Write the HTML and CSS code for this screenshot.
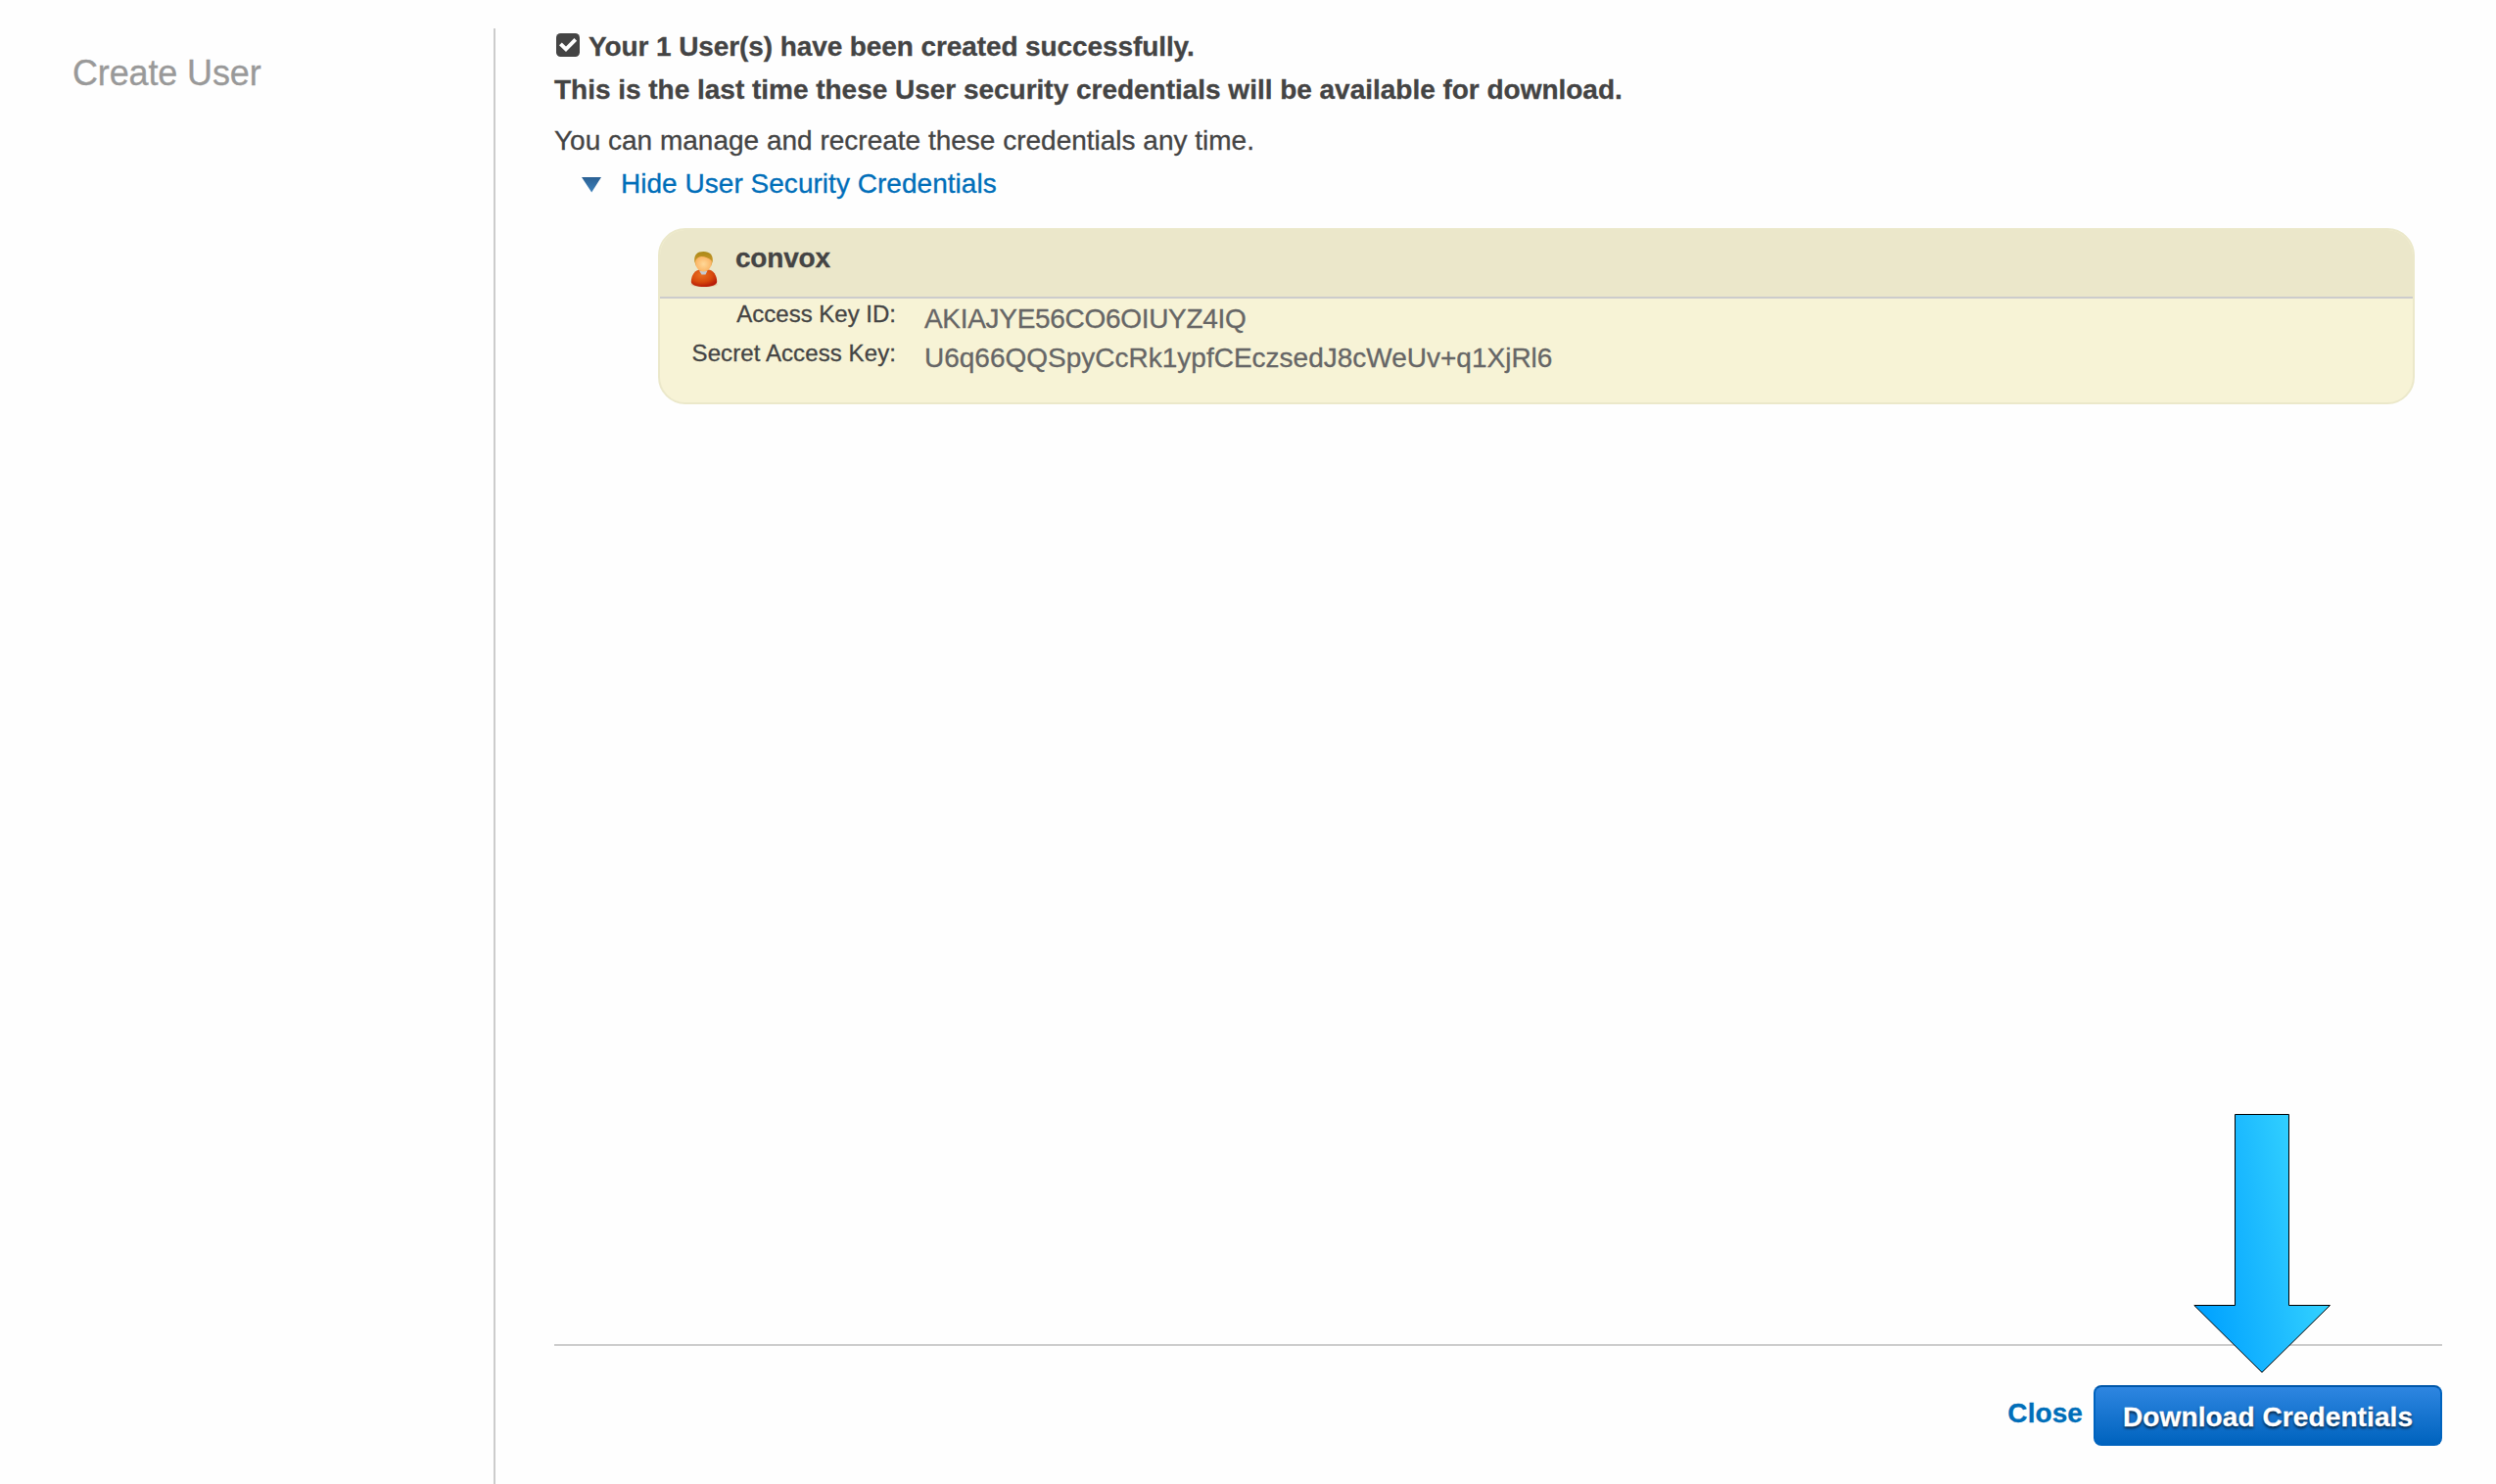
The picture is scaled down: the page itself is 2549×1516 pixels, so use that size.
FILE: index.html
```html
<!DOCTYPE html>
<html lang="en">
<head>
<meta charset="utf-8">
<title>Create User</title>
<link rel="stylesheet" href="styles.css">
</head>
<body>
<div class="wizard">
  <aside class="sidebar">
    <h1 class="title">Create User</h1>
  </aside>
  <main class="main">
    <div class="message">
      <svg class="check" viewBox="0 0 24 24" aria-hidden="true">
        <rect width="24" height="24" rx="4.5" fill="#444"/>
        <path d="M3 12.300 5.800 9.500l4.200 4.100 8.400-8.600 2.700 2.800L10 19z" fill="#fff"/>
      </svg>
      <strong class="created">Your 1 User(s) have been created successfully.</strong>
    </div>
    <strong class="warning">This is the last time these User security credentials will be available for download.</strong>
    <p class="note">You can manage and recreate these credentials any time.</p>
    <a class="toggle">
      <svg class="triangle" viewBox="0 0 20 16" aria-hidden="true">
        <defs><linearGradient id="tri" x1="0" y1="0" x2="0" y2="1"><stop offset="0" stop-color="#2a6093"/><stop offset="1" stop-color="#3d81bb"/></linearGradient></defs>
        <path d="M0 0h20L10.200 15.500z" fill="url(#tri)"/>
      </svg>
      <span class="toggle-label">Hide User Security Credentials</span>
    </a>
    <section class="card">
      <header class="card-head">
        <svg class="avatar" viewBox="0 0 30 38" aria-hidden="true">
          <defs>
            <linearGradient id="hair" x1="0" y1="0" x2="0" y2="1"><stop offset="0" stop-color="#aa8a18"/><stop offset="1" stop-color="#d99b32"/></linearGradient>
            <radialGradient id="face"><stop offset="0" stop-color="#ffd898"/><stop offset="1" stop-color="#fbb565"/></radialGradient>
            <radialGradient id="shirt" cx=".4" cy=".3" r=".7"><stop offset="0" stop-color="#e87022"/><stop offset=".6" stop-color="#d84a0c"/><stop offset="1" stop-color="#b81c08"/></radialGradient>
          </defs>
          <ellipse cx="15" cy="34.500" rx="13.800" ry="2.800" fill="#d6ba8c" opacity=".5"/>
          <path d="M1.800 32c0-7 4.200-12.500 9.200-12.500h8c5.500 0 9.200 6 9.200 12.500 0 3-6 5-13.200 5S1.800 35 1.800 32z" fill="url(#shirt)"/>
          <path d="M10 20.500h8.500l-2 4h-4z" fill="#c3cad4"/>
          <path d="M5.200 11C4.700 4 8 1 14.500 1c6.500 0 9.800 3.500 9.300 10l-1.800 5H7z" fill="url(#hair)"/>
          <path d="M6.200 10.500c1-2.500 3-4 6-4.500 3.800.2 8 1.500 10.600 4.500.4 5.500-2.800 11-8.300 11s-8.800-5.500-8.300-11z" fill="url(#face)"/>
        </svg>
        <h2 class="user-name">convox</h2>
      </header>
      <dl class="credentials">
        <dt class="key key-id">Access Key ID:</dt>
        <dd class="value value-id">AKIAJYE56CO6OIUYZ4IQ</dd>
        <dt class="key key-secret">Secret Access Key:</dt>
        <dd class="value">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</dd>
      </dl>
    </section>
    <footer class="footer">
      <a class="close">Close</a>
      <button class="download" type="button">Download Credentials</button>
      <svg class="arrow" viewBox="0 0 140 266" aria-hidden="true">
        <defs><linearGradient id="sky" gradientUnits="userSpaceOnUse" x1="-2" y1="150" x2="146" y2="124"><stop offset="0" stop-color="#00a2ff"/><stop offset=".5" stop-color="#1ebcff"/><stop offset="1" stop-color="#3bdaff"/></linearGradient></defs>
        <path d="M42.500 1.500h55v195h42L70 265 .8 196.500h41.700z" fill="url(#sky)" stroke="#000" stroke-width="1"/>
      </svg>
    </footer>
  </main>
</div>
</body>
</html>
```
FILE: styles.css
```css
* {
  box-sizing: border-box;
}

body {
  margin: 0;
  background: #fefefe;
  color: #444;
  font: 28px/44px "Liberation Sans", Arial, sans-serif;
  -webkit-text-stroke: 0.3px currentColor;
}

.wizard {
  display: flex;
  height: 1516px;
}

.sidebar {
  flex: 0 0 506px;
  margin-top: 29px;
  padding: 24px 0 0 74px;
  border-right: 2px solid #ccc;
}

.title {
  margin: 0;
  color: #999;
  font-size: 36px;
  font-weight: 400;
  line-height: 44px;
  letter-spacing: -0.137px;
}

.main {
  flex: 1;
  display: flex;
  flex-direction: column;
  padding: 26px 55px 39px 60px;
}

.message {
  display: flex;
  align-items: flex-start;
  gap: 9px;
}

.check {
  width: 24px;
  height: 24px;
  margin: 8px 0 0 2px;
}

.created {
  letter-spacing: -0.094px;
}

.warning {
  letter-spacing: -0.019px;
}

.note {
  margin: 8px 0 0;
}

.toggle {
  display: flex;
  align-items: flex-start;
  gap: 20px;
  padding-left: 28px;
  color: #006eb9;
}

.triangle {
  width: 20px;
  height: 16px;
  margin-top: 15px;
}

.toggle-label {
  letter-spacing: 0.03px;
}

.card {
  margin: 23px 28px 0 106px;
  height: 180px;
  border: 2px solid #ebe8ca;
  border-radius: 28px;
  background: #f7f3d6;
}

.card-head {
  display: flex;
  align-items: flex-start;
  gap: 17px;
  height: 70px;
  padding: 9px 0 0 30px;
  border-bottom: 2px solid #ccc;
  border-radius: 26px 26px 0 0;
  background: #ebe7ca;
}

.avatar {
  width: 30px;
  height: 38px;
  margin-top: 12px;
}

.user-name {
  margin: 0;
  font-size: 28px;
  line-height: 40px;
  letter-spacing: -0.2px;
}

.credentials {
  display: grid;
  grid-template-columns: 241px auto;
  grid-auto-rows: 40px;
  column-gap: 29px;
  margin: 0;
}

.key {
  font-size: 24px;
  line-height: 31px;
  text-align: right;
}

.key-secret {
  letter-spacing: 0.094px;
}

.value {
  margin: 0;
  color: #666;
  line-height: 41px;
}

.value-id {
  letter-spacing: -0.304px;
}

.footer {
  position: relative;
  display: flex;
  align-items: flex-start;
  justify-content: flex-end;
  gap: 11px;
  margin-top: auto;
  padding-top: 40px;
  border-top: 2px solid #ccc;
}

.close {
  color: #006eb9;
  font-weight: 700;
  line-height: 58px;
  letter-spacing: 0.081px;
}

.download {
  width: 356px;
  height: 62px;
  padding: 2px 0 0 28px;
  border: 2px solid #0063be;
  border-top-color: #0057a9;
  border-radius: 8px;
  background: linear-gradient(#2e86e1, #0063be);
  color: #fff;
  font: 700 28px/58px "Liberation Sans", Arial, sans-serif;
  letter-spacing: 0.107px;
  text-align: left;
  text-shadow: 0 2px 3px rgba(0, 0, 0, 0.75);
}

/* callout arrow pointing at the download button */
.arrow {
  position: absolute;
  right: 114px;
  top: -238px;
  width: 140px;
  height: 266px;
}
```
